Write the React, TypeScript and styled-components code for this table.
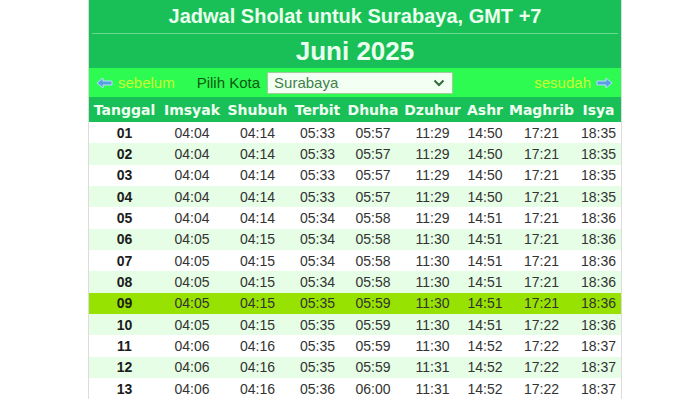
import React from "react";
import styled, { createGlobalStyle } from "styled-components";

const Global = createGlobalStyle`
  html, body { margin: 0; padding: 0; background: #ffffff; }
  body { font-family: "Liberation Sans", Arial, sans-serif; }
`;

const GREEN = "#19bf57";
const BRIGHT = "#2dfb52";
const COLS = "71px 64px 67px 53px 58px 61px 44px 69px 45px";

const Wrapper = styled.div`
  width: 532px;
  margin-left: 88px;
  border-left: 1px solid #dcdcdc;
  border-right: 1px solid #dcdcdc;
`;

const TitleBar = styled.div`
  background: ${GREEN};
  height: 33px;
  display: flex;
  align-items: center;
  justify-content: center;
  color: #eaffee;
  font-weight: bold;
  font-size: 20px;
  padding-bottom: 1px;
  box-sizing: border-box;
`;

const Divider = styled.div`
  background: ${GREEN};
  height: 1px;
  padding: 0 3px;
  & > div { height: 1px; background: #6ad88f; }
`;

const MonthBar = styled.div`
  background: ${GREEN};
  height: 34px;
  display: flex;
  align-items: center;
  justify-content: center;
  color: #eaffee;
  font-weight: bold;
  font-size: 26px;
`;

const NavBar = styled.div`
  background: ${BRIGHT};
  height: 29px;
  display: flex;
  align-items: center;
  padding: 0 8px 0 7px;
  font-size: 15px;
`;

const NavLink = styled.span<{ $right?: boolean }>`
  display: flex;
  align-items: center;
  gap: 5px;
  color: #c8ff2e;
  margin-left: ${(p) => (p.$right ? "auto" : "0")};
`;

const Label = styled.span`
  color: #0b5a12;
  margin-left: 22px;
  margin-right: 7px;
`;

const SelectWrap = styled.div`
  position: relative;
  width: 186px;
  height: 22px;
`;

const Select = styled.select`
  appearance: none;
  -webkit-appearance: none;
  width: 100%;
  height: 100%;
  box-sizing: border-box;
  border: 1px solid #9ccf9c;
  background: #f4fff4;
  color: #3f7f4a;
  font-family: "Liberation Sans", Arial, sans-serif;
  font-size: 15px;
  padding: 0 0 0 6px;
  outline: none;
  border-radius: 0;
`;

const Chevron = styled.svg`
  position: absolute;
  right: 8px;
  top: 7px;
  pointer-events: none;
`;

const HeaderRow = styled.div`
  display: grid;
  grid-template-columns: ${COLS};
  background: ${GREEN};
  height: 25px;
  align-items: center;
  color: #f0fff2;
  font-family: "DejaVu Sans", Verdana, sans-serif;
  font-weight: bold;
  font-size: 14px;
`;

const Cell = styled.div`
  text-align: center;
  white-space: nowrap;
`;

const Row = styled.div<{ $bg: string }>`
  display: grid;
  grid-template-columns: ${COLS};
  height: 21.33px;
  align-items: center;
  background: ${(p) => p.$bg};
  font-size: 14px;
  color: #333;
`;

const DateCell = styled(Cell)`
  font-weight: bold;
  color: #1c1c1c;
`;

const Arrow: React.FC<{ dir: "left" | "right" }> = ({ dir }) => (
  <svg width="17" height="12" viewBox="0 0 17 12" style={{ transform: dir === "right" ? "scaleX(-1)" : undefined }}>
    <path d="M1 6 L7 1 L7 4 L16 4 L16 8 L7 8 L7 11 Z" fill="#5a9fe0" stroke="#b9dcff" strokeWidth="1" />
  </svg>
);

const headers = ["Tanggal", "Imsyak", "Shubuh", "Terbit", "Dhuha", "Dzuhur", "Ashr", "Maghrib", "Isya"];

const data: string[][] = [
  ["01", "04:04", "04:14", "05:33", "05:57", "11:29", "14:50", "17:21", "18:35"],
  ["02", "04:04", "04:14", "05:33", "05:57", "11:29", "14:50", "17:21", "18:35"],
  ["03", "04:04", "04:14", "05:33", "05:57", "11:29", "14:50", "17:21", "18:35"],
  ["04", "04:04", "04:14", "05:33", "05:57", "11:29", "14:50", "17:21", "18:35"],
  ["05", "04:04", "04:14", "05:34", "05:58", "11:29", "14:51", "17:21", "18:36"],
  ["06", "04:05", "04:15", "05:34", "05:58", "11:30", "14:51", "17:21", "18:36"],
  ["07", "04:05", "04:15", "05:34", "05:58", "11:30", "14:51", "17:21", "18:36"],
  ["08", "04:05", "04:15", "05:34", "05:58", "11:30", "14:51", "17:21", "18:36"],
  ["09", "04:05", "04:15", "05:35", "05:59", "11:30", "14:51", "17:21", "18:36"],
  ["10", "04:05", "04:15", "05:35", "05:59", "11:30", "14:51", "17:22", "18:36"],
  ["11", "04:06", "04:16", "05:35", "05:59", "11:30", "14:52", "17:22", "18:37"],
  ["12", "04:06", "04:16", "05:35", "05:59", "11:31", "14:52", "17:22", "18:37"],
  ["13", "04:06", "04:16", "05:36", "06:00", "11:31", "14:52", "17:22", "18:37"],
];

export default function App() {
  return (
    <>
      <Global />
      <Wrapper>
        <TitleBar>Jadwal Sholat untuk Surabaya, GMT +7</TitleBar>
        <Divider><div /></Divider>
        <MonthBar>Juni 2025</MonthBar>
        <NavBar>
          <NavLink><Arrow dir="left" />sebelum</NavLink>
          <Label>Pilih Kota</Label>
          <SelectWrap>
            <Select defaultValue="Surabaya">
              <option>Surabaya</option>
            </Select>
            <Chevron width="12" height="8" viewBox="0 0 12 8">
              <path d="M1.5 1.5 L6 6 L10.5 1.5" fill="none" stroke="#2f6b3a" strokeWidth="2" />
            </Chevron>
          </SelectWrap>
          <NavLink $right>sesudah<Arrow dir="right" /></NavLink>
        </NavBar>
        <HeaderRow>
          {headers.map((h) => <Cell key={h}>{h}</Cell>)}
        </HeaderRow>
        {data.map((r, i) => {
          const bg = r[0] === "09" ? "#97e200" : i % 2 === 1 ? "#e6fde6" : "#ffffff";
          return (
            <Row key={r[0]} $bg={bg}>
              <DateCell>{r[0]}</DateCell>
              {r.slice(1).map((t, j) => <Cell key={j}>{t}</Cell>)}
            </Row>
          );
        })}
      </Wrapper>
    </>
  );
}
